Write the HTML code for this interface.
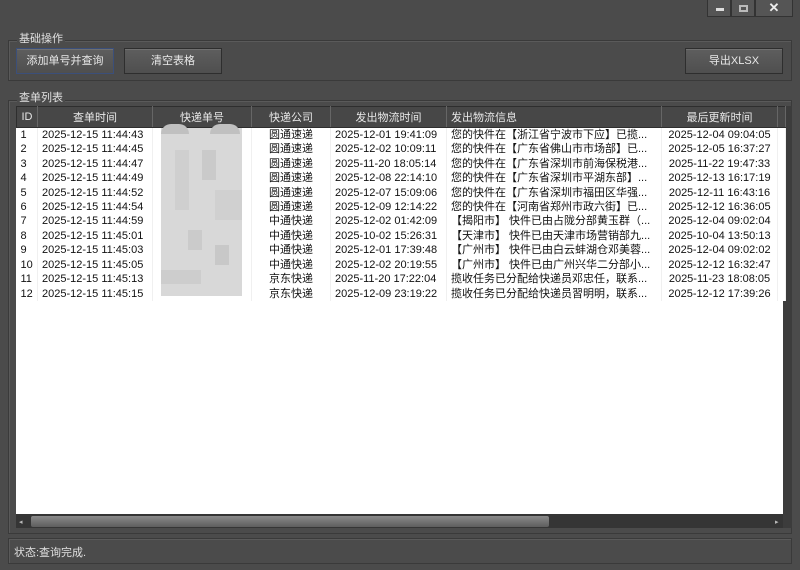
<!DOCTYPE html>
<html><head><meta charset="utf-8">
<style>
*{margin:0;padding:0;box-sizing:border-box}
body{width:800px;height:570px;background:#4b4b4b;font-family:"Liberation Sans","Noto Sans CJK SC",sans-serif;font-size:11px;color:#ddd;position:relative;overflow:hidden}
.abs{position:absolute}
.tb{top:0;height:17px;background:#555;border:1px solid #333;border-top:none}
.grp{border:1px solid #3a3a3a;box-shadow:inset 1px 1px 0 #5a5a5a}
.lbl{font-size:11px;color:#e0e0e0}
.btn{height:26px;background:linear-gradient(#5e5e5e,#4f4f4f);border:1px solid #2e2e2e;box-shadow:inset 0 1px 0 #707070;color:#e8e8e8;text-align:center;line-height:24px;font-size:11px}
table{border-collapse:collapse;table-layout:fixed;position:absolute;left:16px;top:106px;width:769px}
th{height:21px;background:#474747;color:#e8e8e8;font-weight:normal;border:1px solid #2e2e2e;border-right:1px solid #666;font-size:11px;white-space:nowrap;overflow:hidden}
td{height:14.45px;line-height:14px;background:#fff;color:#111;white-space:nowrap;overflow:hidden;font-size:11px;padding-left:4px;border-right:1px solid #f0f0f0}
td.c{text-align:center;padding-left:0}
</style></head><body>
<div class="abs tb" style="left:707px;width:24px"><div class="abs" style="left:8px;top:8px;width:8px;height:3px;background:#ddd"></div></div>
<div class="abs tb" style="left:731px;width:24px"><div class="abs" style="left:7px;top:5px;width:9px;height:7px;border:2px solid #bbb"></div></div>
<div class="abs tb" style="left:755px;width:38px;color:#eee;text-align:center;font-size:13px;font-weight:bold;line-height:16px">✕</div>

<div class="abs grp" style="left:8px;top:40px;width:784px;height:41px"></div>
<div class="abs lbl" style="left:17px;top:30px;background:#4b4b4b;padding:0 2px">基础操作</div>
<div class="abs btn" style="left:16px;top:48px;width:98px;border-color:#3b4f7a">添加单号并查询</div>
<div class="abs btn" style="left:124px;top:48px;width:98px">清空表格</div>
<div class="abs btn" style="left:685px;top:48px;width:98px">导出XLSX</div>

<div class="abs grp" style="left:8px;top:100px;width:784px;height:434px"></div>
<div class="abs lbl" style="left:17px;top:89px;background:#4b4b4b;padding:0 2px">查单列表</div>
<div class="abs" style="left:16px;top:106px;width:769px;height:408px;background:#fff"></div>
<div class="abs" style="left:783px;top:106px;width:9px;height:422px;background:#3c3c3c"></div>
<table>
<colgroup><col style="width:21px"><col style="width:115px"><col style="width:99px"><col style="width:79px"><col style="width:116px"><col style="width:215px"><col style="width:116px"><col style="width:8px"></colgroup>
<tr><th>ID</th><th>查单时间</th><th>快递单号</th><th>快递公司</th><th>发出物流时间</th><th style="text-align:left;padding-left:4px">发出物流信息</th><th>最后更新时间</th><th></th></tr>
<tr><td>1</td><td>2025-12-15 11:44:43</td><td></td><td class="c">圆通速递</td><td>2025-12-01 19:41:09</td><td>您的快件在【浙江省宁波市下应】已揽...</td><td class="c">2025-12-04 09:04:05</td><td></td></tr>
<tr><td>2</td><td>2025-12-15 11:44:45</td><td></td><td class="c">圆通速递</td><td>2025-12-02 10:09:11</td><td>您的快件在【广东省佛山市市场部】已...</td><td class="c">2025-12-05 16:37:27</td><td></td></tr>
<tr><td>3</td><td>2025-12-15 11:44:47</td><td></td><td class="c">圆通速递</td><td>2025-11-20 18:05:14</td><td>您的快件在【广东省深圳市前海保税港...</td><td class="c">2025-11-22 19:47:33</td><td></td></tr>
<tr><td>4</td><td>2025-12-15 11:44:49</td><td></td><td class="c">圆通速递</td><td>2025-12-08 22:14:10</td><td>您的快件在【广东省深圳市平湖东部】...</td><td class="c">2025-12-13 16:17:19</td><td></td></tr>
<tr><td>5</td><td>2025-12-15 11:44:52</td><td></td><td class="c">圆通速递</td><td>2025-12-07 15:09:06</td><td>您的快件在【广东省深圳市福田区华强...</td><td class="c">2025-12-11 16:43:16</td><td></td></tr>
<tr><td>6</td><td>2025-12-15 11:44:54</td><td></td><td class="c">圆通速递</td><td>2025-12-09 12:14:22</td><td>您的快件在【河南省郑州市政六街】已...</td><td class="c">2025-12-12 16:36:05</td><td></td></tr>
<tr><td>7</td><td>2025-12-15 11:44:59</td><td></td><td class="c">中通快递</td><td>2025-12-02 01:42:09</td><td>【揭阳市】 快件已由占陇分部黄玉群（...</td><td class="c">2025-12-04 09:02:04</td><td></td></tr>
<tr><td>8</td><td>2025-12-15 11:45:01</td><td></td><td class="c">中通快递</td><td>2025-10-02 15:26:31</td><td>【天津市】 快件已由天津市场营销部九...</td><td class="c">2025-10-04 13:50:13</td><td></td></tr>
<tr><td>9</td><td>2025-12-15 11:45:03</td><td></td><td class="c">中通快递</td><td>2025-12-01 17:39:48</td><td>【广州市】 快件已由白云蚌湖仓邓美蓉...</td><td class="c">2025-12-04 09:02:02</td><td></td></tr>
<tr><td>10</td><td>2025-12-15 11:45:05</td><td></td><td class="c">中通快递</td><td>2025-12-02 20:19:55</td><td>【广州市】 快件已由广州兴华二分部小...</td><td class="c">2025-12-12 16:32:47</td><td></td></tr>
<tr><td>11</td><td>2025-12-15 11:45:13</td><td></td><td class="c">京东快递</td><td>2025-11-20 17:22:04</td><td>揽收任务已分配给快递员邓忠任，联系...</td><td class="c">2025-11-23 18:08:05</td><td></td></tr>
<tr><td>12</td><td>2025-12-15 11:45:15</td><td></td><td class="c">京东快递</td><td>2025-12-09 23:19:22</td><td>揽收任务已分配给快递员習明明，联系...</td><td class="c">2025-12-12 17:39:26</td><td></td></tr>
</table>
<div class="abs" style="left:161px;top:128px;width:81px;height:168px;background:#d8d8d8"></div>
<div class="abs" style="left:161px;top:124px;width:28px;height:10px;background:#c0c0c0;border-radius:14px 14px 0 0"></div>
<div class="abs" style="left:210px;top:124px;width:30px;height:10px;background:#c0c0c0;border-radius:15px 15px 0 0"></div>
<div class="abs" style="left:175px;top:150px;width:14px;height:60px;background:#cfcfcf"></div>
<div class="abs" style="left:202px;top:150px;width:14px;height:30px;background:#cacaca"></div>
<div class="abs" style="left:215px;top:190px;width:27px;height:30px;background:#d0d0d0"></div>
<div class="abs" style="left:188px;top:230px;width:14px;height:20px;background:#cbcbcb"></div>
<div class="abs" style="left:215px;top:245px;width:14px;height:20px;background:#c8c8c8"></div>
<div class="abs" style="left:161px;top:270px;width:40px;height:14px;background:#cdcdcd"></div>
<div class="abs" style="left:16px;top:514px;width:767px;height:14px;background:#353535"></div>
<div class="abs" style="left:31px;top:516px;width:518px;height:11px;background:linear-gradient(#8a8a8a,#5e5e5e);border-radius:2px"></div>
<div class="abs" style="left:19px;top:518px;color:#bbb;font-size:7px">◂</div>
<div class="abs" style="left:775px;top:518px;color:#bbb;font-size:7px">▸</div>

<div class="abs grp" style="left:8px;top:538px;width:784px;height:26px"></div>
<div class="abs lbl" style="left:14px;top:544px">状态:查询完成.</div>
</body></html>
